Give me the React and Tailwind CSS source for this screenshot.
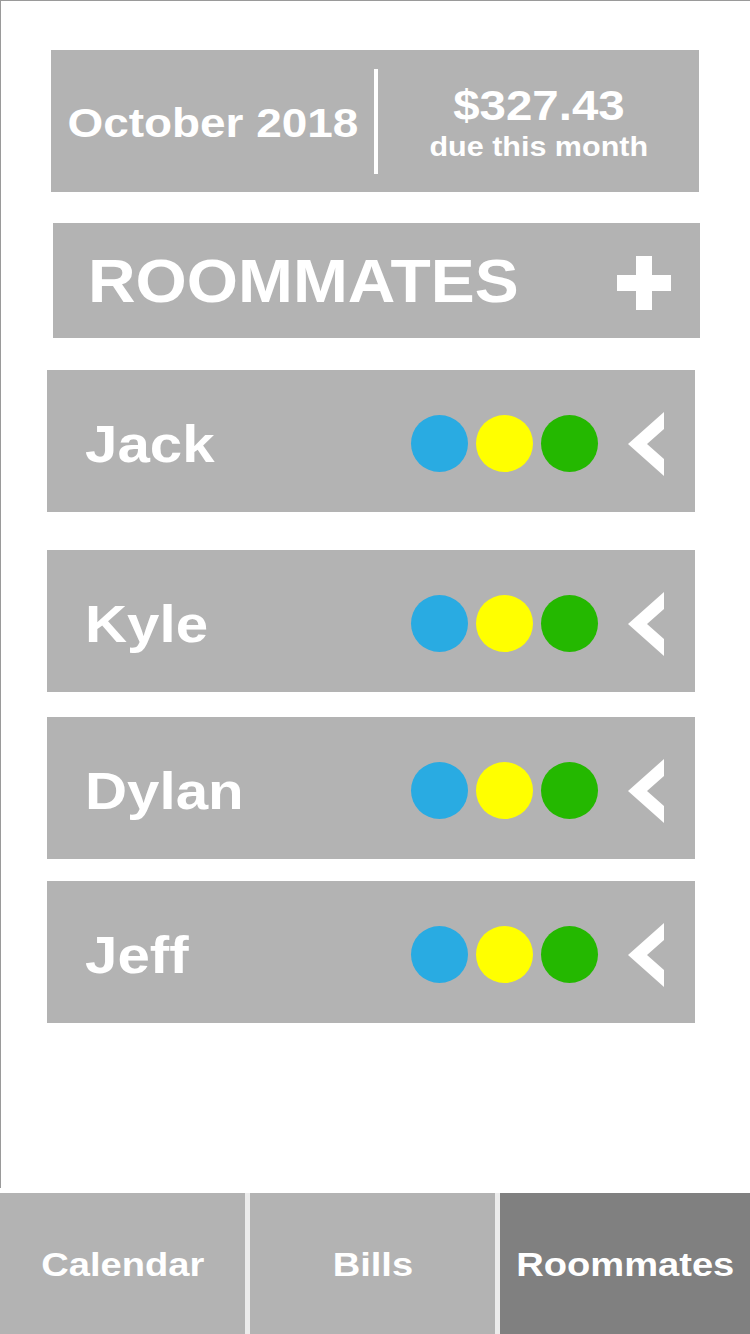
import React from "react";

const roommates = [
  { name: "Jack", mt: "mt-[32px]" },
  { name: "Kyle", mt: "mt-[38px]" },
  { name: "Dylan", mt: "mt-[25px]" },
  { name: "Jeff", mt: "mt-[22px]" },
];

function Chevron() {
  return (
    <svg width="36" height="64" viewBox="0 0 36 64" className="shrink-0">
      <polygon points="36,0 36,17 19,32 36,47 36,64 0,32" fill="#ffffff" />
    </svg>
  );
}

function RoommateRow({ name, mt }) {
  return (
    <div className={`${mt} ml-[46px] w-[648px] h-[142px] bg-[#b3b3b3] flex items-center pl-[38px] pr-[31px]`}>
      <span className="inline-block origin-left scale-x-[1.12] text-[52px] leading-none text-white font-bold mt-[6px]">
        {name}
      </span>
      <div className="ml-auto flex items-center gap-[8px] mt-[5px]">
        <div className="w-[57px] h-[57px] rounded-full bg-[#29abe2]" />
        <div className="w-[57px] h-[57px] rounded-full bg-[#ffff00]" />
        <div className="w-[57px] h-[57px] rounded-full bg-[#24b800]" />
      </div>
      <div className="ml-[30px] mt-[6px]">
        <Chevron />
      </div>
    </div>
  );
}

function Tab({ label, active, width }) {
  return (
    <div
      className={`${width} h-full flex items-center justify-center ${
        active ? "bg-[#808080]" : "bg-[#b3b3b3]"
      }`}
    >
      <span className="inline-block scale-x-[1.12] text-[34px] leading-none text-white font-bold">
        {label}
      </span>
    </div>
  );
}

export default function App() {
  return (
    <div className="w-[750px] h-[1334px] bg-white flex flex-col font-['Liberation_Sans',Arial,sans-serif] overflow-hidden">
      <div className="h-[1188px] border-t border-l border-[#9a9a9a] flex flex-col">
        <div className="mt-[49px] ml-[50px] w-[648px] h-[142px] bg-[#b3b3b3] flex items-center">
          <div className="w-[323px] flex justify-center mt-[4px]">
            <span className="inline-block scale-x-[1.12] text-[41px] leading-none text-white font-bold">
              October 2018
            </span>
          </div>
          <div className="w-[4px] h-[105px] bg-white" />
          <div className="flex-1 flex flex-col items-center mt-[4px]">
            <span className="inline-block scale-x-[1.13] text-[42px] leading-none text-white font-bold">
              $327.43
            </span>
            <span className="inline-block scale-x-[1.13] text-[27px] leading-none text-white font-bold mt-[7px]">
              due this month
            </span>
          </div>
        </div>

        <div className="mt-[31px] ml-[52px] w-[647px] h-[115px] bg-[#b3b3b3] flex items-center pl-[35px] pr-[29px]">
          <span className="inline-block origin-left scale-x-[1.08] text-[61px] leading-none text-white font-bold mt-[2px]">
            ROOMMATES
          </span>
          <svg width="54" height="54" viewBox="0 0 54 54" className="ml-auto mt-[5px]">
            <rect x="19" y="0" width="16" height="54" fill="#ffffff" />
            <rect x="0" y="19" width="54" height="16" fill="#ffffff" />
          </svg>
        </div>

        {roommates.map((r) => (
          <RoommateRow key={r.name} name={r.name} mt={r.mt} />
        ))}
      </div>

      <div className="mt-[5px] flex-1 flex gap-[5px] bg-[#ececec]">
        <Tab label="Calendar" width="w-[245px]" />
        <Tab label="Bills" width="w-[245px]" />
        <Tab label="Roommates" width="flex-1" active />
      </div>
    </div>
  );
}
